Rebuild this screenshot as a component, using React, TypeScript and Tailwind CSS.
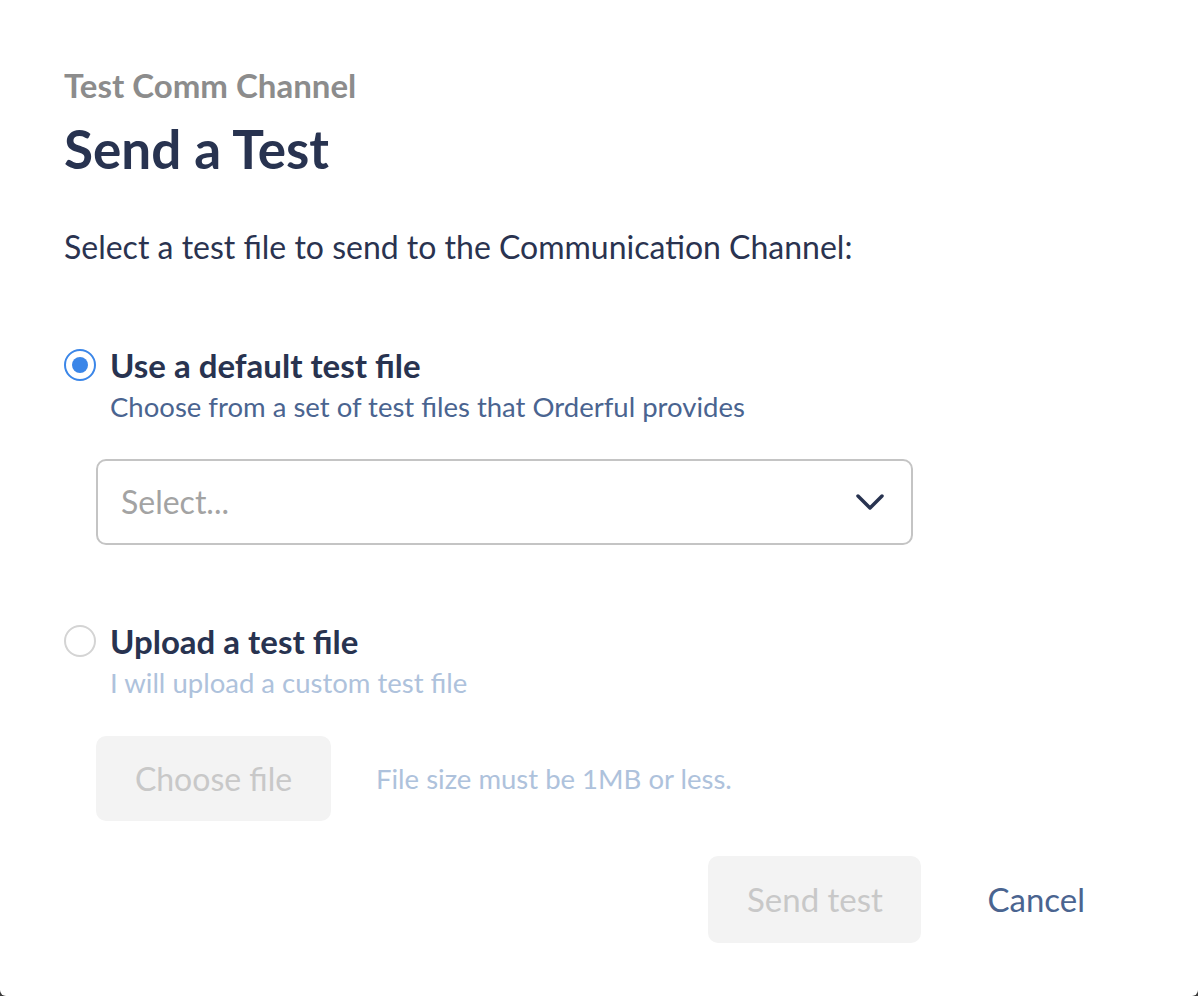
import React from 'react';

export default function App() {
  return (
    <div className="min-h-screen bg-[#3a3a3a]" style={{ fontFamily: 'Lato, "Noto Sans", sans-serif' }}>
      <div className="h-[996px] w-full rounded-b-[6px] bg-white pl-16 pr-[113px] pt-[65px]">
        {/* Header */}
        <div className="text-[33px] font-bold leading-[40px] text-[#8c8c8c]">Test Comm Channel</div>
        <h1 className="mt-[12px] text-[53px] font-bold leading-[64px] text-[#283350]">Send a Test</h1>

        <p className="mt-[46px] text-[32px] leading-[40px] text-[#2a3350]">
          Select a test file to send to the Communication Channel:
        </p>

        {/* Default file option */}
        <div className="mt-[78px] flex h-[40px] items-center gap-[14px]">
          <span className="flex h-[32px] w-[32px] items-center justify-center rounded-full border-2 border-[#3b86e8]">
            <span className="h-[16px] w-[16px] rounded-full bg-[#3b86e8]" />
          </span>
          <span className="text-[33px] font-bold leading-[40px] text-[#283350]">Use a default test file</span>
        </div>
        <div className="ml-[46px] mt-[4px] text-[27.5px] leading-[36px] text-[#4a6490]">
          Choose from a set of test files that Orderful provides
        </div>

        <div className="ml-8 mt-[34px] flex h-[86px] w-[817px] items-center justify-between rounded-[10px] border-2 border-[#c4c4c4] pl-[23px] pr-[26px]">
          <span className="text-[32px] text-[#a3a3a3]">Select...</span>
          <svg width="30" height="18" viewBox="0 0 30 18" fill="none">
            <path d="M3 3l12 12L27 3" stroke="#283350" strokeWidth="3.5" strokeLinecap="round" strokeLinejoin="round" />
          </svg>
        </div>

        {/* Upload option */}
        <div className="mt-[76px] flex h-[40px] items-center gap-[14px]">
          <span className="h-[32px] w-[32px] rounded-full border-2 border-[#d4d4d4]" />
          <span className="text-[33px] font-bold leading-[40px] text-[#283350]">Upload a test file</span>
        </div>
        <div className="ml-[46px] mt-[4px] text-[27.5px] leading-[36px] text-[#aec2dc]">
          I will upload a custom test file
        </div>

        <div className="ml-8 mt-[35px] flex items-center gap-[45px]">
          <button className="h-[85px] w-[235px] rounded-[10px] bg-[#f3f3f3] text-[32px] text-[#c8c8c8]">
            Choose file
          </button>
          <span className="text-[27.5px] text-[#aec2dc]">File size must be 1MB or less.</span>
        </div>

        {/* Footer actions */}
        <div className="mt-[35px] flex items-center justify-end gap-[66px]">
          <button className="h-[87px] w-[213px] rounded-[10px] bg-[#f3f3f3] text-[33px] text-[#c8c8c8]">
            Send test
          </button>
          <button className="text-[33px] text-[#4a6490]">Cancel</button>
        </div>
      </div>
    </div>
  );
}
